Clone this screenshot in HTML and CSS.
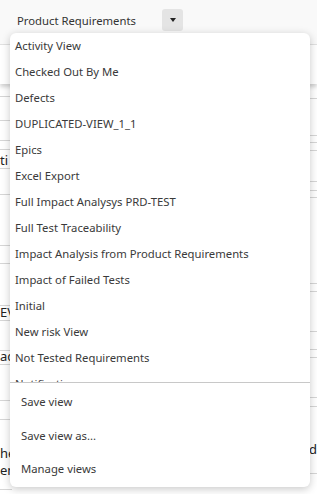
FILE: index.html
```html
<!DOCTYPE html>
<html lang="en">
<head>
<meta charset="UTF-8">
<meta name="viewport" content="width=device-width, initial-scale=1.0">
<title>Views</title>
<link rel="stylesheet" href="styles.css">
</head>
<body>
  <div class="page">
    <header class="topbar">
      <span class="view-name">Product Requirements</span>
      <button type="button" class="caret-btn"><span class="caret"></span></button>
    </header>
    <div class="toolbar"></div>

    <!-- grid rows behind the menu -->
    <div class="grid">
      <div class="col col-left">
        <div class="cell" style="height:13px"></div>
        <div class="cell" style="height:24px"></div>
        <div class="cell" style="height:20px"></div>
        <div class="cell" style="height:9px"></div>
        <div class="cell txt" style="height:19px">ti</div>
        <div class="cell" style="height:26px"></div>
        <div class="cell" style="height:51px"></div>
        <div class="cell" style="height:18px"></div>
        <div class="cell" style="height:42px"></div>
        <div class="cell txt" style="height:15px">EV</div>
        <div class="cell" style="height:30px"></div>
        <div class="cell txt" style="height:14px">ac</div>
        <div class="cell" style="height:36px"></div>
        <div class="cell" style="height:19px"></div>
        <div class="cell txt two" style="height:70px"><span>he</span><span>em</span></div>
      </div>
      <div class="col col-mid"></div>
      <div class="col col-right">
        <div class="cell" style="height:15px"></div>
        <div class="cell" style="height:37px"></div>
        <div class="cell" style="height:7px"></div>
        <div class="cell" style="height:8px"></div>
        <div class="cell" style="height:31px"></div>
        <div class="cell" style="height:9px"></div>
        <div class="cell" style="height:7px"></div>
        <div class="cell" style="height:86px"></div>
        <div class="cell" style="height:8px"></div>
        <div class="cell" style="height:40px"></div>
        <div class="cell" style="height:18px"></div>
        <div class="cell" style="height:8px"></div>
        <div class="cell" style="height:40px"></div>
        <div class="cell" style="height:9px"></div>
        <div class="cell txt right" style="height:67px">d</div>
      </div>
    </div>
  </div>

  <div class="menu">
    <ul class="menu-list">
      <li>Activity View</li>
      <li>Checked Out By Me</li>
      <li>Defects</li>
      <li>DUPLICATED-VIEW_1_1</li>
      <li>Epics</li>
      <li>Excel Export</li>
      <li>Full Impact Analysys PRD-TEST</li>
      <li>Full Test Traceability</li>
      <li>Impact Analysis from Product Requirements</li>
      <li>Impact of Failed Tests</li>
      <li>Initial</li>
      <li>New risk View</li>
      <li>Not Tested Requirements</li>
      <li>Notifications</li>
    </ul>
    <ul class="menu-actions">
      <li>Save view</li>
      <li>Save view as...</li>
      <li>Manage views</li>
    </ul>
  </div>
</body>
</html>
```

FILE: styles.css
```css
html, body {
  margin: 0;
  padding: 0;
}
body {
  font-family: "Noto Sans", "Open Sans", Arial, sans-serif;
  color: #333;
  background: #fff;
  width: 317px;
  height: 494px;
  overflow: hidden;
  position: relative;
}
.topbar {
  height: 45px;
  background: #f9f9f9;
  border-bottom: 1px solid #e2e2e2;
  display: flex;
  align-items: flex-start;
  padding: 9px 0 0 17px;
  box-sizing: border-box;
}
.view-name {
  font-size: 11.3px;
  line-height: 23px;
  color: #333;
  width: 145px;
}
.caret-btn {
  width: 21px;
  height: 22px;
  border: none;
  border-radius: 3px;
  background: #e4e4e4;
  padding: 0;
  display: flex;
  align-items: center;
  justify-content: center;
}
.caret {
  width: 0;
  height: 0;
  border-left: 3.5px solid transparent;
  border-right: 3.5px solid transparent;
  border-top: 4px solid #222;
}
.toolbar {
  height: 39px;
  background: #fff;
  box-shadow: 0 3px 4px rgba(0, 0, 0, 0.18);
  position: relative;
  z-index: 1;
}
.grid {
  display: flex;
  font-size: 13px;
  color: #222;
}
.col-left {
  width: 12px;
}
.col-mid {
  flex: 1;
}
.col-right {
  width: 12px;
  overflow: hidden;
}
.cell {
  border-bottom: 1px solid #d6d6d6;
  box-sizing: border-box;
  white-space: nowrap;
  line-height: 15px;
}
.cell.txt {
  display: flex;
  align-items: flex-end;
}
.cell.two {
  flex-direction: column;
  align-items: flex-start;
  justify-content: flex-end;
  padding-bottom: 10px;
  line-height: 17px;
}
.cell.right {
  justify-content: flex-end;
  align-items: flex-start;
  padding-top: 35px;
}
.menu {
  position: absolute;
  left: 10px;
  top: 33px;
  width: 300px;
  height: 454px;
  background: #fff;
  border-radius: 6px;
  box-shadow: 0 2px 9px rgba(0, 0, 0, 0.22);
  display: flex;
  flex-direction: column;
  overflow: hidden;
  z-index: 5;
}
.menu ul {
  list-style: none;
  margin: 0;
  padding: 0;
}
.menu-list {
  height: 350px;
  overflow: hidden;
  border-bottom: 1px solid #c8c8c8;
  padding-top: 1px;
  box-sizing: border-box;
}
.menu-list li {
  height: 26px;
  line-height: 26px;
  padding-left: 5px;
  font-size: 11.3px;
  color: #3a3a3a;
  white-space: nowrap;
}
.menu .menu-actions {
  padding-top: 2px;
}
.menu-actions li {
  height: 33.5px;
  line-height: 33.5px;
  padding-left: 11px;
  font-size: 11.3px;
  color: #3a3a3a;
}
```
